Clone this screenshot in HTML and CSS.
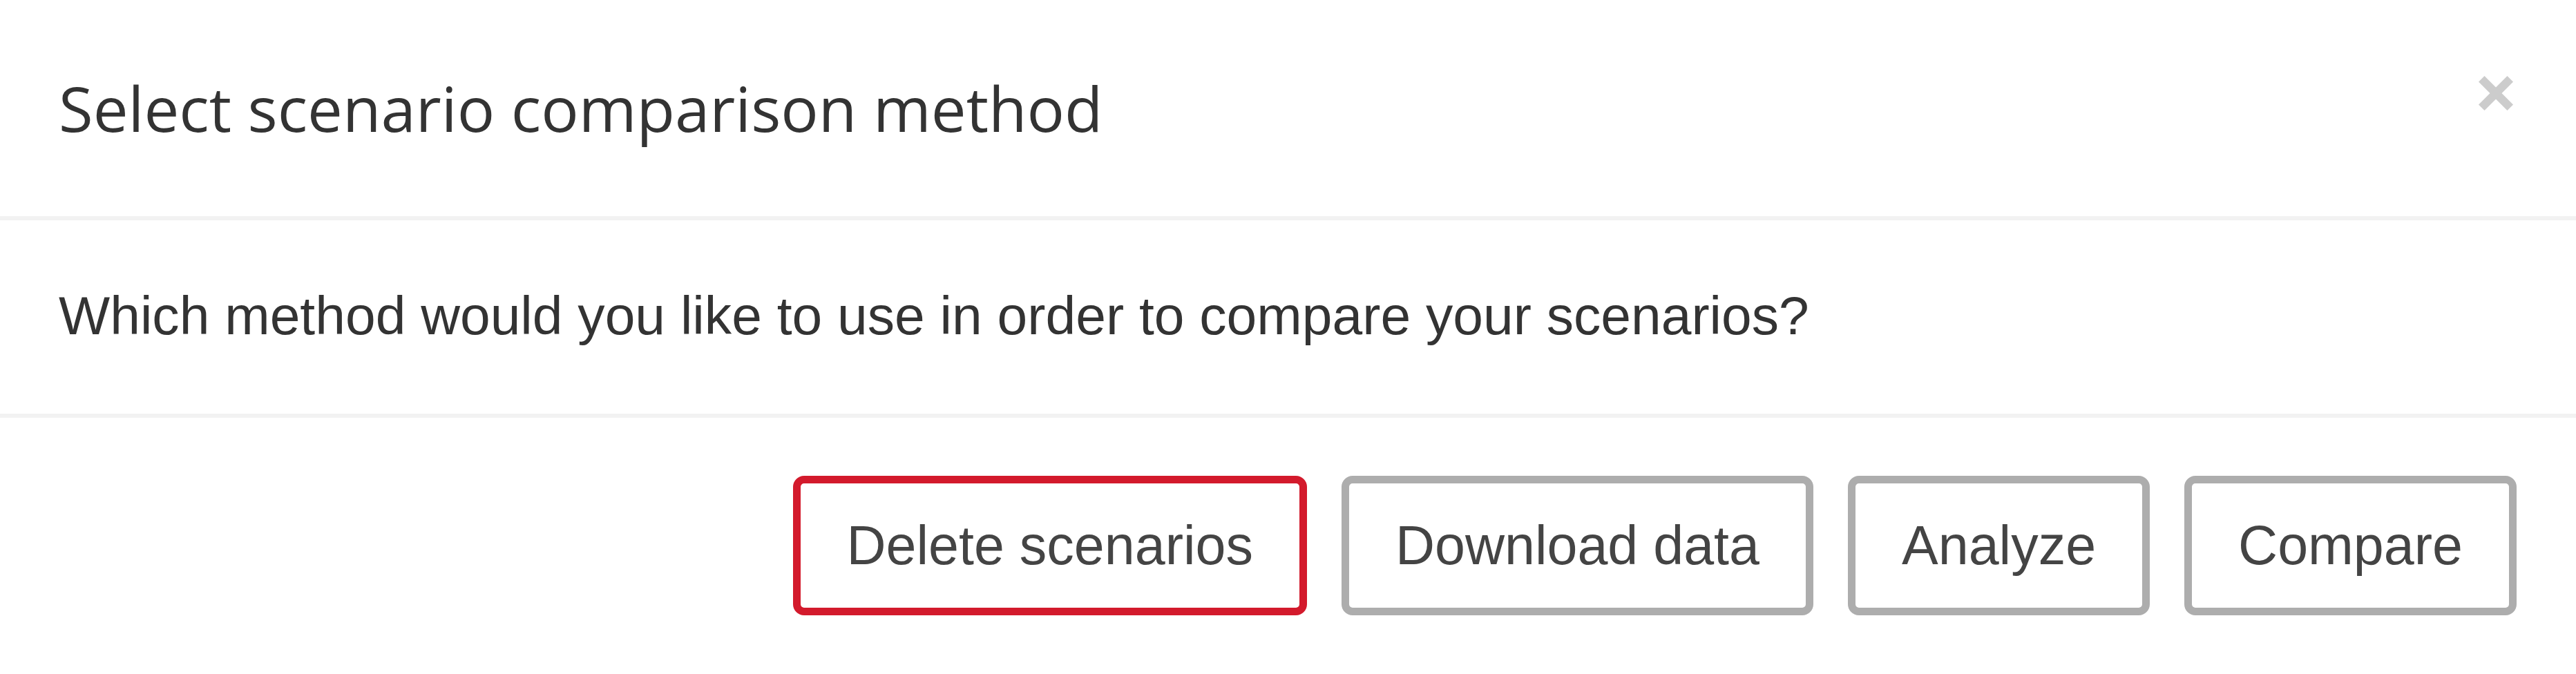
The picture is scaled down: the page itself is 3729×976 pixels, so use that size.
FILE: index.html
```html
<!DOCTYPE html>
<html lang="en">
<head>
<meta charset="utf-8">
<title>Select scenario comparison method</title>
<link rel="stylesheet" href="styles.css">
</head>
<body>
<div class="modal">
  <div class="modal-header">
    <h4 class="modal-title">Select scenario comparison method</h4>
    <button class="close" type="button" aria-label="Close">
      <svg class="close-icon" viewBox="0 0 50 50" width="50" height="50" aria-hidden="true">
        <line x1="4.25" y1="4.25" x2="45.75" y2="45.75"/>
        <line x1="45.75" y1="4.25" x2="4.25" y2="45.75"/>
      </svg>
    </button>
  </div>
  <div class="modal-body">
    <p class="question">Which method would you like to use in order to compare your scenarios?</p>
  </div>
  <div class="modal-footer">
    <button class="btn btn-danger" type="button">Delete scenarios</button>
    <button class="btn" type="button">Download data</button>
    <button class="btn" type="button">Analyze</button>
    <button class="btn" type="button">Compare</button>
  </div>
</div>
</body>
</html>
```

FILE: styles.css
```css
* {
  box-sizing: border-box;
}

html, body {
  margin: 0;
  padding: 0;
  background: #ffffff;
}

body {
  font-family: "Liberation Sans", Arial, sans-serif;
  color: #333333;
}

.modal {
  width: 100%;
  height: 976px;
  display: flex;
  flex-direction: column;
  background: #ffffff;
}

.modal-header {
  height: 319px;
  display: flex;
  justify-content: space-between;
  align-items: flex-start;
  padding: 85px 91px 0 85px;
  border-bottom: 6px solid #f2f2f2;
}

.modal-title {
  margin: 0;
  font-family: "Open Sans", Lato, sans-serif;
  font-weight: 400;
  font-size: 90.6px;
  line-height: 143px;
  color: #333333;
}

.close {
  margin: 25px 0 0 0;
  padding: 0;
  border: 0;
  background: transparent;
  width: 50px;
  height: 50px;
  display: flex;
  cursor: pointer;
}

.close-icon {
  display: block;
  stroke: #cccccc;
  stroke-width: 12;
  stroke-linecap: butt;
}

.modal-body {
  height: 286px;
  padding: 81px 85px 0 85px;
  border-bottom: 6px solid #f2f2f2;
}

.question {
  margin: 0;
  font-size: 78.6px;
  line-height: 114px;
  color: #333333;
}

.modal-footer {
  flex: 1;
  display: flex;
  justify-content: flex-end;
  align-items: flex-start;
  gap: 50px;
  padding: 84px 86px 0 85px;
}

.btn {
  font-family: "Liberation Sans", Arial, sans-serif;
  font-size: 79px;
  line-height: 114px;
  color: #444444;
  background: #ffffff;
  border: 11px solid #adadad;
  border-radius: 16px;
  padding: 33px 67px;
  height: 202px;
  white-space: nowrap;
  cursor: pointer;
}

.btn-danger {
  border-color: #d31a2c;
}
```
